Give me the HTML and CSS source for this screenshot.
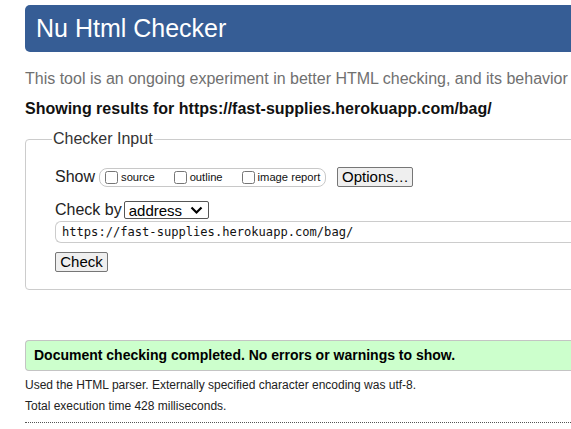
FILE: index.html
```html
<!DOCTYPE html>
<html>
<head>
<meta charset="utf-8">
<link rel="stylesheet" href="styles.css">
</head>
<body>
<div class="page">
  <h1 class="banner">Nu Html Checker</h1>
  <p class="intro">This tool is an ongoing experiment in better HTML checking, and its behavior</p>
  <p class="showing">Showing results for https://fast-supplies.herokuapp.com/bag/</p>
  <fieldset class="input-box">
    <legend class="legend">Checker Input</legend>
    <div class="row show-row">
      <span class="lbl">Show</span>
      <span class="group">
        <label class="opt"><input type="checkbox" class="cb">source</label>
        <label class="opt"><input type="checkbox" class="cb">outline</label>
        <label class="opt last"><input type="checkbox" class="cb">image report</label>
      </span>
      <button class="btn opts">Options…</button>
    </div>
    <div class="row by-row">
      <span class="lbl">Check by</span>
      <span class="select">address<svg class="chev" width="13" height="9" viewBox="0 0 13 9"><path d="M1.5 1.5 L6.5 6.5 L11.5 1.5" fill="none" stroke="#000" stroke-width="2.2"/></svg></span>
    </div>
    <div class="url">https://fast-supplies.herokuapp.com/bag/</div>
    <button class="btn check">Check</button>
  </fieldset>
  <div class="success">Document checking completed. No errors or warnings to show.</div>
  <p class="meta">Used the HTML parser. Externally specified character encoding was utf-8.</p>
  <p class="meta">Total execution time 428 milliseconds.</p>
  <div class="dots"></div>
</div>
</body>
</html>
```
FILE: styles.css
```css
html, body {
  margin: 0;
  padding: 0;
  overflow: hidden;
  background: #fff;
}
.page {
  width: 700px;
  padding: 5px 0 0 25px;
  font-family: "Liberation Sans", Arial, sans-serif;
  color: #000;
}
.banner {
  margin: 0;
  height: 47px;
  box-sizing: border-box;
  background: #365d95;
  color: #fff;
  font-weight: normal;
  font-size: 25px;
  line-height: 47px;
  padding-left: 11px;
  border-radius: 5px 0 0 5px;
}
.intro {
  margin: 17px 0 0;
  font-size: 16px;
  line-height: 19px;
  color: #707070;
  white-space: nowrap;
}
.showing {
  margin: 12px 0 0;
  font-size: 16px;
  line-height: 18px;
  font-weight: bold;
  color: #111;
  white-space: nowrap;
}
.input-box {
  margin: 12px 0 0;
  border: 1px solid #ccc;
  border-radius: 4px;
  padding: 19px 0 17px 29px;
  min-width: 0;
}
.legend {
  font-size: 16px;
  color: #333;
  padding: 0 1px;
  margin-left: -3px;
  line-height: 18px;
}
.row {
  display: flex;
  align-items: center;
}
.lbl {
  font-size: 16px;
  color: #222;
}
.group {
  display: inline-flex;
  align-items: center;
  margin-left: 4px;
  height: 17px;
  border: 1px solid #c8c8c8;
  border-radius: 8px;
  padding: 0 5px 0 5px;
}
.opt {
  display: inline-flex;
  align-items: center;
  font-size: 11.2px;
  color: #111;
  margin-right: 19px;
}
.opt.last {
  margin-right: 0;
}
.cb {
  margin: 0 3px 0 0;
  width: 13px;
  height: 13px;
}
.btn {
  font-family: "Liberation Sans", Arial, sans-serif;
  font-size: 15px;
  color: #000;
  background: #efefef;
  border: 1px solid #767676;
  border-radius: 2px;
  padding: 0 6px;
  height: 20px;
  line-height: 18px;
}
.opts {
  margin-left: 11px;
  width: 76px;
  padding: 0;
}
.by-row {
  margin-top: 14px;
}
.select {
  display: inline-flex;
  align-items: center;
  justify-content: space-between;
  margin-left: 2px;
  box-sizing: border-box;
  width: 85px;
  height: 18px;
  border: 1px solid #555;
  border-radius: 2px;
  padding: 0 5px 0 4px;
  font-size: 15px;
  color: #000;
}
.url {
  margin-top: 2px;
  height: 22px;
  box-sizing: border-box;
  border: 1px solid #ccc;
  border-right: none;
  border-radius: 6px 0 0 6px;
  padding-left: 6px;
  font-family: "DejaVu Sans Mono", monospace;
  font-size: 12.1px;
  line-height: 20px;
  color: #111;
}
.check {
  margin-top: 9px;
  width: 53px;
  padding: 0;
  display: block;
}
.success {
  margin-top: 50px;
  height: 31px;
  box-sizing: border-box;
  background: #ccffcc;
  border: 1px solid #c4c4c4;
  border-right: none;
  border-radius: 4px 0 0 4px;
  padding-left: 8px;
  font-size: 14px;
  font-weight: bold;
  line-height: 29px;
  color: #000;
}
.meta {
  margin: 7px 0 0;
  font-size: 12px;
  line-height: 15px;
  color: #222;
}
.meta + .meta {
  margin-top: 6px;
}
.dots {
  margin-top: 8px;
  border-top: 1px dotted #555;
}
```
